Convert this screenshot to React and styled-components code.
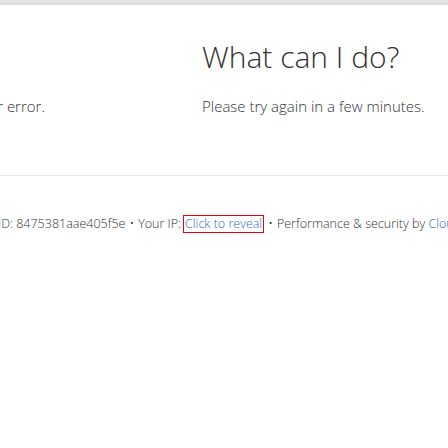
import React from "react";
import styled, { createGlobalStyle } from "styled-components";

const GlobalStyle = createGlobalStyle`
  html, body {
    margin: 0;
    padding: 0;
    background: #ffffff;
    overflow: hidden;
  }
  body {
    font-family: "Open Sans", "Noto Sans", sans-serif;
    color: #404040;
  }
`;

const Page = styled.div`
  width: 448px;
  height: 448px;
  overflow: hidden;
  display: flex;
  flex-direction: column;
`;

const TopBand = styled.div`
  height: 5px;
  background: linear-gradient(#e6e6e6, #dcdcdc);
  flex-shrink: 0;
`;

const Details = styled.section`
  padding-top: 34px;
  padding-bottom: 57px;
  display: grid;
  grid-template-columns: 45px auto;
  column-gap: 157px;
`;

const Column = styled.div`
  display: flex;
  flex-direction: column;
  align-self: ${(p) => (p.$bottom ? "end" : "start")};
  justify-content: flex-end;
`;

const ClippedLine = styled.div`
  display: flex;
  justify-content: flex-end;
  white-space: nowrap;
`;

const Heading = styled.h2`
  margin: 0 0 20px;
  font-size: 30px;
  line-height: 36px;
  font-weight: 300;
  color: #333333;
`;

const Text = styled.p`
  margin: 0;
  font-size: 15px;
  line-height: 22.5px;
  font-weight: 350;
  color: #333333;
  white-space: nowrap;
`;

const Footer = styled.footer`
  border-top: 1px solid #e5e5e5;
  padding-top: 39px;
  display: flex;
  align-items: baseline;
  font-size: 12.5px;
  line-height: 18px;
  font-weight: 350;
  color: #333333;
  white-space: nowrap;
`;

const FooterLead = styled.div`
  width: 181px;
  flex-shrink: 0;
  display: flex;
  justify-content: flex-end;
`;

const Separator = styled.span`
  margin: 0 4px;
`;

const RevealButton = styled.button`
  margin: 0 0 0 2px;
  padding: 0 1px;
  border: 1px solid #e8000b;
  border-radius: 0;
  background: transparent;
  font: inherit;
  line-height: 16px;
  color: #2f6fbf;
  cursor: pointer;
  flex-shrink: 0;
`;

const Rest = styled.span`
  flex-shrink: 0;
`;

const Link = styled.a`
  color: #2f6fbf;
  text-decoration: none;
`;

export default function App() {
  return (
    <Page>
      <GlobalStyle />
      <TopBand />
      <Details>
        <Column $bottom>
          <ClippedLine>
            <Text>There is an internal server error.</Text>
          </ClippedLine>
        </Column>
        <Column>
          <Heading>What can I do?</Heading>
          <Text>Please try again in a few minutes.</Text>
        </Column>
      </Details>
      <Footer>
        <FooterLead>
          <span>
            Cloudflare Ray ID: 8475381aae405f5e
            <Separator>•</Separator>
            Your IP:
          </span>
        </FooterLead>
        <RevealButton type="button">Click to reveal</RevealButton>
        <Rest>
          <Separator>•</Separator>
          Performance &amp; security by <Link href="#">Cloudflare</Link>
        </Rest>
      </Footer>
    </Page>
  );
}
